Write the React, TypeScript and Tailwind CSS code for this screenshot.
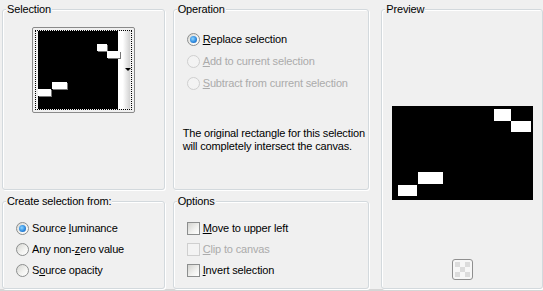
import React from "react";

const font = { fontFamily: '"Liberation Sans", Arial, sans-serif' };

function Group({
  title,
  className,
  children,
}: {
  title: string;
  className: string;
  children?: React.ReactNode;
}) {
  return (
    <div
      className={`relative border border-[#d3d9dd] rounded-[3px] shadow-[inset_1px_1px_0_#ffffff,1px_1px_0_#ffffff] ${className}`}
    >
      <span className="absolute -top-[7px] left-[3px] px-[1px] bg-[#f0f0f0] leading-[13px] text-black whitespace-nowrap">
        {title}
      </span>
      {children}
    </div>
  );
}

function Radio({ checked, disabled }: { checked?: boolean; disabled?: boolean }) {
  return (
    <span
      className={`flex h-[13px] w-[13px] shrink-0 items-center justify-center rounded-full border ${
        disabled
          ? "border-[#cfcfcf] bg-[#f3f3f3]"
          : "border-[#8c8e8e] bg-[linear-gradient(135deg,#d6d6d2_0%,#f4f4f2_60%,#ffffff_100%)]"
      }`}
    >
      {checked && (
        <span className="h-[7px] w-[7px] rounded-full bg-[radial-gradient(circle_at_40%_40%,#8fd6ff_0%,#2f8be0_55%,#0f4fa8_100%)]" />
      )}
    </span>
  );
}

function Check({ disabled }: { disabled?: boolean }) {
  return (
    <span
      className={`h-[13px] w-[13px] shrink-0 border ${
        disabled
          ? "border-[#cfcfcf] bg-[#f3f3f3]"
          : "border-[#8c8e8e] bg-[linear-gradient(135deg,#d3d3cf_0%,#f2f2f0_60%,#ffffff_100%)]"
      }`}
    />
  );
}

function Row({
  control,
  children,
  disabled,
  h,
}: {
  control: React.ReactNode;
  children: React.ReactNode;
  disabled?: boolean;
  h: string;
}) {
  return (
    <div className={`flex items-center gap-[3px] ${h}`}>
      {control}
      <span className={`leading-[13px] whitespace-nowrap ${disabled ? "text-[#ababab]" : "text-black"}`}>
        {children}
      </span>
    </div>
  );
}

function Thumb() {
  return (
    <div className="ml-[29px] mt-[17px] h-[86px] w-[103px] rounded-[2px] border border-[#8a8a8a] bg-[#f0f0f0] pt-[2px] pl-[2px] pr-[2px]">
      <div className="relative flex h-[80px] border border-dotted border-black pl-[2px]">
        <div className="h-full w-[80px] bg-black" />
        <div className="relative h-full w-[12px] bg-[linear-gradient(90deg,#ffffff_0%,#ffffff_40%,#d2d2d2_100%)]">
          <span className="absolute left-[7px] top-[37px] h-0 w-0 border-l-[3px] border-r-[3px] border-t-[3px] border-l-transparent border-r-transparent border-t-black" />
        </div>
        <span className="absolute left-[61px] top-[13px] h-[7px] w-[10px] bg-white shadow-[1px_1px_0_#777]" />
        <span className="absolute left-[71px] top-[20px] h-[7px] w-[13px] bg-white shadow-[1px_1px_0_#777]" />
        <span className="absolute left-[16px] top-[51px] h-[7px] w-[15px] bg-white shadow-[1px_1px_0_#777]" />
        <span className="absolute left-[2px] top-[58px] h-[7px] w-[13px] bg-white shadow-[1px_1px_0_#777]" />
      </div>
    </div>
  );
}

function Preview() {
  return (
    <div className="ml-[10px] mt-[96px] relative h-[94px] w-[141px] bg-black">
      <span className="absolute left-[102px] top-[3px] h-[12px] w-[17px] bg-white" />
      <span className="absolute left-[119px] top-[15px] h-[11px] w-[20px] bg-white" />
      <span className="absolute left-[26px] top-[66px] h-[12px] w-[25px] bg-white" />
      <span className="absolute left-[6px] top-[79px] h-[11px] w-[19px] bg-white" />
    </div>
  );
}

function CheckerIcon() {
  return (
    <div className="ml-[70px] mt-[59px] h-[21px] w-[21px] overflow-hidden rounded-[3px] border border-[#8f8f8f] bg-[#f7f7f7] p-[2px]">
      <div className="grid h-full w-full grid-cols-3 grid-rows-3">
        <span className="bg-[#dcdcdc]" />
        <span className="bg-[#f7f7f7]" />
        <span className="bg-[#dcdcdc]" />
        <span className="bg-[#f7f7f7]" />
        <span className="bg-[#dcdcdc]" />
        <span className="bg-[#f7f7f7]" />
        <span className="bg-[#dcdcdc]" />
        <span className="bg-[#f7f7f7]" />
        <span className="bg-[#dcdcdc]" />
      </div>
    </div>
  );
}

export default function App() {
  return (
    <div
      style={font}
      className="flex h-[291px] w-[543px] gap-[8px] border-b-2 border-[#d6d6d6] bg-[#f0f0f0] pl-[2px] pt-[9px] text-[11px] tracking-[-0.15px] text-black"
    >
      <div className="flex w-[163px] flex-col gap-[11px]">
        <Group title="Selection" className="h-[181px]">
          <Thumb />
        </Group>
        <Group title="Create selection from:" className="h-[88px]">
          <div className="ml-[13px] mt-[16px] flex flex-col">
            <Row h="h-[21px]" control={<Radio checked />}>
              Source <u>l</u>uminance
            </Row>
            <Row h="h-[21px]" control={<Radio />}>
              Any non-<u>z</u>ero value
            </Row>
            <Row h="h-[21px]" control={<Radio />}>
              S<u>o</u>urce opacity
            </Row>
          </div>
        </Group>
      </div>
      <div className="flex w-[197px] flex-col gap-[11px]">
        <Group title="Operation" className="h-[181px]">
          <div className="ml-[13px] mt-[18px] flex flex-col">
            <Row h="h-[22px]" control={<Radio checked />}>
              <u>R</u>eplace selection
            </Row>
            <Row h="h-[22px]" control={<Radio disabled />} disabled>
              <u>A</u>dd to current selection
            </Row>
            <Row h="h-[22px]" control={<Radio disabled />} disabled>
              <u>S</u>ubtract from current selection
            </Row>
          </div>
          <p className="ml-[9px] mt-[33px] whitespace-nowrap leading-[13px]">
            The original rectangle for this selection
            <br />
            will completely intersect the canvas.
          </p>
        </Group>
        <Group title="Options" className="h-[88px]">
          <div className="ml-[13px] mt-[16px] flex flex-col">
            <Row h="h-[21px]" control={<Check />}>
              <u>M</u>ove to upper left
            </Row>
            <Row h="h-[21px]" control={<Check disabled />} disabled>
              <u>C</u>lip to canvas
            </Row>
            <Row h="h-[21px]" control={<Check />}>
              <u>I</u>nvert selection
            </Row>
          </div>
        </Group>
      </div>
      <div className="ml-[4px] flex w-[162px] flex-col">
        <Group title="Preview" className="h-[280px]">
          <Preview />
          <CheckerIcon />
        </Group>
      </div>
    </div>
  );
}
